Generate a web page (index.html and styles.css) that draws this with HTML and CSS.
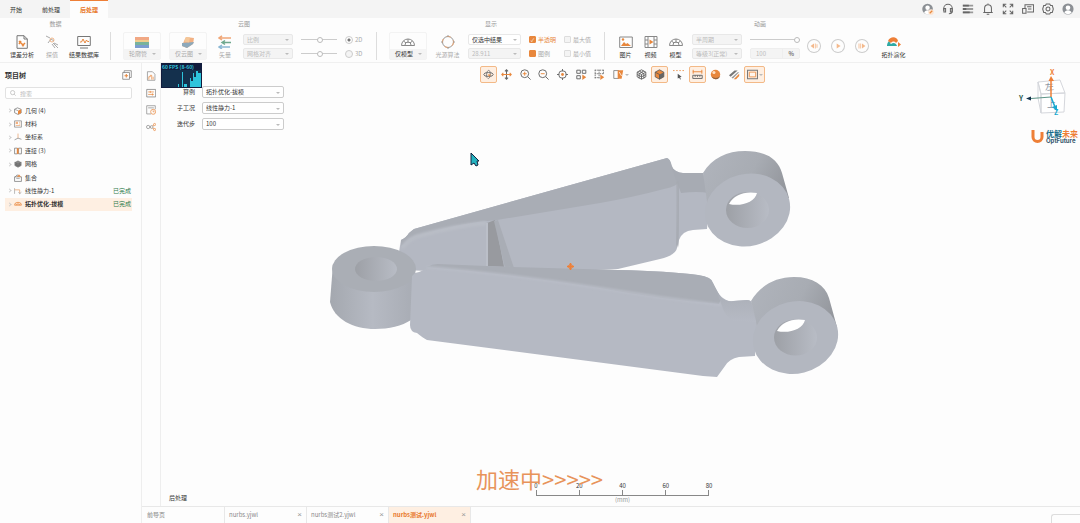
FILE: index.html
```html
<!DOCTYPE html>
<html lang="zh-CN">
<head>
    <meta charset="UTF-8">
    <meta name="viewport" content="width=device-width, initial-scale=1.0">
    <title>后处理</title>
    <link rel="stylesheet" href="styles.css">
</head>
<body>
    <header class="topbar">
        <nav class="main-tabs">
            <button class="main-tab">开始</button>
            <button class="main-tab">前处理</button>
            <button class="main-tab active">后处理</button>
        </nav>
        <div class="top-icons">
            <button class="icon-button" aria-label="用户">
                <svg viewBox="0 0 14 14"><circle cx="6.500" cy="7" r="6.200" fill="#8b8f94"/><circle cx="6.500" cy="5.500" r="2.600" fill="#fff"/><path d="M2.500 11.500c.5-4 7.500-4 8 0a6 6 0 0 1-8 0z" fill="#fff"/><circle cx="10.500" cy="10.500" r="3.300" fill="#fbe3d0"/><path d="M9 12l3-3" stroke="#e8873c" stroke-width="1.400"/></svg>
            </button>
            <button class="icon-button" aria-label="客服">
                <svg viewBox="0 0 14 14" class="line"><path d="M2 9V6.500a5 5 0 0 1 10 0V9c0 2-1.500 3.500-4 3.500"/><path d="M2.200 6.500h2v4h-2zM9.800 6.500h2v4h-2z"/></svg>
            </button>
            <button class="icon-button" aria-label="列表">
                <svg viewBox="0 0 14 14" class="line"><path d="M1 3h12M1 7h12M1 11h12" stroke-width="2.200" stroke="#999"/><path d="M1 3h7M1 7h4M1 11h8" stroke-width="2.200"/></svg>
            </button>
            <button class="icon-button" aria-label="通知">
                <svg viewBox="0 0 14 14" class="line"><path d="M1.500 11h11M3 11V6a4 4 0 0 1 8 0v5M7 .5V2M5.500 13h3"/></svg>
            </button>
            <button class="icon-button" aria-label="全屏">
                <svg viewBox="0 0 14 14" class="line"><path d="M1.500 5V1.500H5M1.500 1.500l3.500 3.500M9 1.500h3.500V5M12.500 1.500L9 5M1.500 9v3.500H5M1.500 12.500L5 9M12.500 9v3.500H9M12.500 12.500L9 9"/></svg>
            </button>
            <button class="icon-button" aria-label="窗口">
                <svg viewBox="0 0 14 14" class="line"><path d="M3.500 6V2h10v8.500H6M6 4.500h5M7 7h4M.7 6.500h4v5.500h-4z"/></svg>
            </button>
            <button class="icon-button" aria-label="设置">
                <svg viewBox="0 0 14 14" class="line"><path d="M5 1.200h4l1 1.700h2l1.200 4.100-1.200 4h-2l-1 1.800H5L4 11H2L.8 7 2 3h2z"/><circle cx="7" cy="7" r="2.300"/></svg>
            </button>
            <button class="icon-button" aria-label="账户">
                <svg viewBox="0 0 14 14"><circle cx="7" cy="7" r="6.500" fill="#8b8f94"/><circle cx="7" cy="5.500" r="2.700" fill="#fff"/><path d="M2.800 11.500c.5-4 7.900-4 8.400 0a6 6 0 0 1-8.400 0z" fill="#fff"/></svg>
            </button>
        </div>
    </header>

    <section class="ribbon">
        <div class="group">
            <h2 class="group-title">数据</h2>
            <div class="group-body data-body">
                <button class="tool tool-m">
                    <svg viewBox="0 0 14 14"><path d="M2 .7h7l3.300 3.300v9.300H2z" fill="none" stroke="#777"/><path d="M9 .7V4h3.300" fill="none" stroke="#777"/><path d="M4 6l5 5M4 9l2-3M7 11l3-3" stroke="#e8873c" stroke-width="1.500"/></svg>
                    <span>误差分析</span>
                </button>
                <button class="tool tool-s muted">
                    <svg viewBox="0 0 14 14" fill="none" stroke="#aaa"><path d="M1 1l4 2M3 8l3-4 3 2M8 8l5 5M7 9l3 4M9 8l4 2"/><circle cx="7" cy="5" r="2" stroke="#eeb589"/></svg>
                    <span>探值</span>
                </button>
                <button class="tool tool-l">
                    <svg viewBox="0 0 14 14" fill="none"><path d="M.7 1.500h12.600v9H.7zM3 13h8" stroke="#777"/><path d="M3 7h1.500L6 4l2 4 1.500-3 1 1.500H12" stroke="#e8873c"/></svg>
                    <span>结果数据库</span>
                </button>
            </div>
        </div>

        <div class="group">
            <h2 class="group-title">云图</h2>
            <div class="group-body">
                <button class="split muted">
                    <svg viewBox="0 0 14 11"><path d="M0 0h14v3H0z" fill="#f1a884"/><path d="M0 3h14v2H0z" fill="#f0cd8e"/><path d="M0 5h14v3H0z" fill="#79b39c"/><path d="M0 8h14v3H0z" fill="#7c9ed0"/></svg>
                    <span>轮廓管</span>
                </button>
                <button class="split muted">
                    <svg viewBox="0 0 14 11"><path d="M5 0l8 1-1 6-6 4-5-2 2-5z" fill="#f2b183"/><path d="M1 6l12-1-1 2-6 4-5-2z" fill="#8da9bb"/><path d="M5 0l4 .5-1 5-5-1z" fill="#f4c799"/></svg>
                    <span>仅云图</span>
                </button>
                <button class="tool tool-s muted">
                    <svg viewBox="0 0 14 14" fill="none" stroke-width="1.500"><path d="M1 3h12M4 .8L1 3l3 2" stroke="#f0a778"/><path d="M4 7.500h9M7 5.500L4 7.500l3 2" stroke="#6fa88e"/><path d="M1 12h11M4 10l-3 2 3 2" stroke="#8cb8d4"/></svg>
                    <span>矢量</span>
                </button>
                <div class="stack">
                    <span class="select"><select aria-label="比例" disabled><option>比例</option></select></span>
                    <span class="select"><select aria-label="对齐" disabled><option>网格对齐</option></select></span>
                </div>
                <div class="stack">
                    <input class="slider short" type="range" aria-label="比例值" value="52">
                    <input class="slider short" type="range" aria-label="密度值" value="52">
                </div>
                <div class="stack">
                    <label class="check muted"><input type="radio" name="dim" checked>2D</label>
                    <label class="check muted"><input type="radio" name="dim">3D</label>
                </div>
            </div>
        </div>

        <div class="group">
            <h2 class="group-title">显示</h2>
            <div class="group-body">
                <button class="split">
                    <svg viewBox="0 0 14 11" fill="none" stroke="#888"><path d="M.5 8.500a6.500 6.500 0 0 1 13 0zM4 8a3 3 0 0 1 6 0M7 2v4M2.500 4l2.500 2M11.500 4L9 6"/></svg>
                    <span>仅模型</span>
                </button>
                <button class="tool tool-c muted">
                    <svg viewBox="0 0 14 14" fill="none"><circle cx="7" cy="7" r="5.500" stroke="#999"/><circle cx="7" cy="7" r="5.500" stroke="#f2a66f" stroke-dasharray="4 4"/><path d="M7 0v2M7 12v2M0 7h2M12 7h2" stroke="#999"/></svg>
                    <span>光源算法</span>
                </button>
                <div class="stack">
                    <span class="select wide"><select aria-label="显示范围"><option>仅选中结果</option></select></span>
                    <span class="select wide"><select aria-label="阈值" disabled><option>28.911</option></select></span>
                </div>
                <div class="stack">
                    <label class="check accent"><input type="checkbox" checked>半透明</label>
                    <label class="check muted"><input type="checkbox" class="filled">图例</label>
                </div>
                <div class="stack">
                    <label class="check muted"><input type="checkbox">最大值</label>
                    <label class="check muted"><input type="checkbox">最小值</label>
                </div>
            </div>
        </div>

        <div class="group">
            <h2 class="group-title">动画</h2>
            <div class="group-body">
                <button class="tool tool-p">
                    <svg viewBox="0 0 14 14" fill="none"><path d="M.7 2h12.600v10.500H.7z" stroke="#888"/><path d="M2 11l3-4 2 2 1.500-1L12 11z" fill="#e8873c"/><circle cx="4" cy="4.500" r="1.200" fill="#e8873c"/></svg>
                    <span>图片</span>
                </button>
                <button class="tool tool-p">
                    <svg viewBox="0 0 14 14" fill="none"><path d="M1 1.500h12v11H1zM4 1.500v11M10 1.500v11M1 5h3M1 9h3M10 5h3M10 9h3" stroke="#888"/><path d="M5.500 4.500l4 2.500-4 2.500z" fill="#e8873c"/></svg>
                    <span>视频</span>
                </button>
                <button class="tool tool-p">
                    <svg viewBox="0 0 14 14" fill="none" stroke="#888"><path d="M.5 10.500a6.500 6.500 0 0 1 13 0zM4 10a3 3 0 0 1 6 0M7 4v4M2.500 6L5 8M11.500 6L9 8"/></svg>
                    <span>模型</span>
                </button>
                <div class="stack">
                    <span class="select"><select aria-label="周期" disabled><option>半周期</option></select></span>
                    <span class="select"><select aria-label="速度" disabled><option>等级3(正常)</option></select></span>
                </div>
                <div class="stack">
                    <input class="slider" type="range" aria-label="进度" value="100">
                    <span class="percent"><input type="text" aria-label="百分比" value="100" disabled><span>%</span></span>
                </div>
                <div class="player">
                    <button aria-label="上一帧"><svg viewBox="0 0 14 14"><path d="M7 4v6L3 7zM8 4h1v6H8zM10 5h1v4h-1z"/></svg></button>
                    <button aria-label="播放"><svg viewBox="0 0 14 14"><path d="M5.500 4v6L10 7z"/></svg></button>
                    <button aria-label="下一帧"><svg viewBox="0 0 14 14"><path d="M7 4v6l4-3zM5 4h1v6H5zM3 4h1v6H3z"/></svg></button>
                </div>
                <button class="tool tool-c">
                    <svg viewBox="0 0 14 14"><path d="M0 11a6.500 6.500 0 0 1 2-5l3 5z" fill="#2eaaa5"/><path d="M1 6c2-5 9-5 10 0l-2 2c-1-2-4-2-5 0z" fill="#ee7f37"/><path d="M3 11c1-4 6-4 7 0z" fill="#2eaaa5"/><path d="M11 7l3 2.500-3 2.500z" fill="#ee7f37"/></svg>
                    <span>拓扑演化</span>
                </button>
            </div>
        </div>
    </section>

    <main class="workspace">
        <aside class="sidebar">
            <div class="sidebar-head">
                <h1>项目树</h1>
                <button class="icon-button small" aria-label="展开">
                    <svg viewBox="0 0 14 14" fill="none"><path d="M1 3.500h9.500V13H1zM3 3.500V1h10v9.500h-2.500" stroke="#777"/><path d="M3.500 8h5M6 5.500v5" stroke="#e8873c" stroke-width="1.500"/></svg>
                </button>
            </div>
            <label class="search">
                <svg viewBox="0 0 8 8" fill="none" stroke="#bbb"><circle cx="3.500" cy="3.500" r="2.800"/><path d="M5.500 5.500l2 2"/></svg>
                <input type="text" placeholder="搜索" aria-label="搜索">
            </label>
            <ul class="tree">
                <li>
                    <i class="arrow"></i>
                    <svg viewBox="0 0 14 14"><path d="M1 4l5-2.500L12.500 4v6.500L7 13l-6-3z" fill="none" stroke="#777" stroke-width="1.300"/><path d="M7 6.500L12.500 4v6.500L7 13z" fill="#e8873c"/><path d="M1 4l6 2.500" stroke="#777"/></svg>
                    <span>几何 (4)</span>
                </li>
                <li>
                    <i class="arrow"></i>
                    <svg viewBox="0 0 14 14" fill="none"><path d="M1 1.500h12v11H1z" stroke="#888" stroke-width="1.300"/><path d="M3 3h4v4H3z" fill="#f3b07f"/><path d="M3 9.500h8M9 4h2M9 7h2" stroke="#e8873c"/></svg>
                    <span>材料</span>
                </li>
                <li>
                    <i class="arrow"></i>
                    <svg viewBox="0 0 14 14" fill="none"><path d="M7 1v8" stroke="#e8a06a" stroke-width="1.300"/><path d="M7 9l6 2M7 9l-6 3" stroke="#888" stroke-width="1.300"/></svg>
                    <span>坐标系</span>
                </li>
                <li>
                    <i class="arrow"></i>
                    <svg viewBox="0 0 14 14" fill="none"><path d="M1 2h5v10H1zM8 2h5v10H8z" stroke="#777" stroke-width="1.300"/><path d="M5 2h3v10H5z" fill="#e8873c"/></svg>
                    <span>连接 (3)</span>
                </li>
                <li>
                    <i class="arrow"></i>
                    <svg viewBox="0 0 14 14"><path d="M1 4l6-3 6 3v6l-6 3-6-3z" fill="#888"/><path d="M1 4l6 3 6-3M7 7v6M4 5.500v6M10 5.500v6M1 7l6 3 6-3" fill="none" stroke="#666"/></svg>
                    <span>网格</span>
                </li>
                <li>
                    <i class="arrow none"></i>
                    <svg viewBox="0 0 14 14" fill="none"><path d="M1 5h12v8H1zM2 5l3-3h3" stroke="#777" stroke-width="1.300"/><path d="M5 5l4-4 3 4z" fill="#e8873c"/><path d="M4 8h6" stroke="#777"/></svg>
                    <span>集合</span>
                </li>
                <li>
                    <i class="arrow"></i>
                    <svg viewBox="0 0 14 14" fill="none"><path d="M1 2v10" stroke="#888"/><path d="M1 5h9v6" stroke="#e8a06a" stroke-width="1.300"/><path d="M8 9l2 3 3-3" stroke="#888"/></svg>
                    <span>线性静力-1</span>
                    <em>已完成</em>
                </li>
                <li class="selected">
                    <i class="arrow"></i>
                    <svg viewBox="0 0 14 14" fill="none" stroke="#e8873c" stroke-width="1.400"><path d="M1 9a6 5 0 0 1 12 0zM4 9c0-3 6-3 6 0"/></svg>
                    <span>拓扑优化-拔模</span>
                    <em>已完成</em>
                </li>
            </ul>
        </aside>

        <section class="content">
            <div class="stage">
                <nav class="side-tools">
                    <button class="icon-button small" aria-label="报告"><svg viewBox="0 0 14 14" fill="none"><path d="M2 1h7l3.500 3.500V13H2z" stroke="#888"/><path d="M4 12V8h2V6h2v6M10 8v4" stroke="#e8873c"/></svg></button>
                    <button class="icon-button small" aria-label="参数"><svg viewBox="0 0 14 14" fill="none"><path d="M1 2h12.500v10.500H1z" stroke="#777"/><path d="M3 5.500h8M3 9h8M6 4v3M9 7.500v3" stroke="#e8873c"/></svg></button>
                    <button class="icon-button small" aria-label="历史"><svg viewBox="0 0 14 14" fill="none"><path d="M7 12.500H1V1h12v5M3 4h8" stroke="#888"/><circle cx="10" cy="9.500" r="3.500" stroke="#e8873c"/><path d="M10 7.500v2h2" stroke="#e8873c"/></svg></button>
                    <button class="icon-button small" aria-label="关联"><svg viewBox="0 0 14 14" fill="none"><circle cx="3" cy="7" r="2.300" stroke="#888"/><circle cx="8" cy="7" r="2" stroke="#888"/><circle cx="12" cy="3.500" r="1.500" stroke="#e8873c"/><circle cx="12" cy="10.500" r="1.500" stroke="#e8873c"/><path d="M9 8l2 2M9 6l2-2" stroke="#e8873c"/></svg></button>
                </nav>

                <div class="viewport">
                    <svg class="model" viewBox="161 63 919 443">
                        <defs>
                            <linearGradient id="barrel" x1="0" x2="1">
                                <stop offset="0" stop-color="#a4a8af"/>
                                <stop offset=".5" stop-color="#b6bac3"/>
                                <stop offset="1" stop-color="#a8acb4"/>
                            </linearGradient>
                            <linearGradient id="eye" x1="0" y1="0" x2="1" y2=".4">
                                <stop offset="0" stop-color="#b0b4bc"/>
                                <stop offset=".6" stop-color="#a8acb3"/>
                                <stop offset="1" stop-color="#94979d"/>
                            </linearGradient>
                            <linearGradient id="bore" x1="0" x2="1">
                                <stop offset="0" stop-color="#9da0a6"/>
                                <stop offset="1" stop-color="#b8bcc5"/>
                            </linearGradient>
                            <linearGradient id="neck" x1="0" y1="0" x2="0" y2="1">
                                <stop offset="0" stop-color="#a8acb4"/>
                                <stop offset="1" stop-color="#b6bac4"/>
                            </linearGradient>
                            <filter id="soft" x="-10%" y="-10%" width="120%" height="120%"><feGaussianBlur stdDeviation="1"/></filter>
                        </defs>
                        <!-- rear arm -->
                        <path d="M667 158Q671 159 671 166 675 173 683 173H703L710 193 707 229 693 230Q682 231 679 240L677 248Q676 255 660 259L618 269 498 274 404 270 399 252 401 240Q406 238 409 233L414 229z" fill="#b4b8c2"/>
                        <path d="M414 229L667 158Q670 159 672 166L678 182Q678 186 664 189 634 197 600 203L497 220Q457 223 422 235 410 240 401 246L401 240Q406 238 409 233z" fill="#a9adb5"/>
                        <path d="M402 248q8-11 20-13 34-9 64-12" fill="none" stroke="#b9bdc6" stroke-width="4" filter="url(#soft)"/>
                        <path d="M671 166q5 7 12 7h20l6 20q-12-2-28 0z" fill="#a7abb3"/>
                        <path d="M678 182q1 30-1 64" fill="none" stroke="#a5a9b0" stroke-width="3" filter="url(#soft)"/>
                        <path d="M487 223l8-3 9 47h-18z" fill="#989a9f"/>
                        <path d="M494 221l4-1 16 48h-9z" fill="#a9adb5"/>
                        <path d="M487 223v43" stroke="#bbbfc8" stroke-width="2"/>
                        <!-- left ring -->
                        <path d="M333 264l-3 38c4 17 23 27 45 27 14 0 27-3 36-9l4-48z" fill="url(#barrel)"/>
                        <ellipse cx="374" cy="269" rx="42" ry="23" fill="#aaaeb5"/>
                        <ellipse cx="376" cy="269" rx="21" ry="12" fill="url(#bore)"/>
                        <!-- front arm -->
                        <path d="M412 276l3-3q9-2 12-6 5-3 11-3l75 3 105 3q50 1 80 5 14 2 15 8 8 20 21 18l14-1q4 0 5 6l4 16-2 34-16 1q-10 2-14 9l-8 11-14-1-276-36q-4-2-10-7-7-1-7-8z" fill="#b5b9c3"/>
                        <path d="M427 267q5-3 11-3l75 3 105 3q50 1 80 5 14 2 15 8l8 15-2 6q-60-5-119-16-90-14-173-21z" fill="#a9adb5"/>
                        <path d="M427 267q90 8 173 21 60 10 121 17" fill="none" stroke="#babec8" stroke-width="2" filter="url(#soft)"/>
                        <path d="M714 286q7 17 19 15l14-1q5 0 5 6l5 16-23-1q-9-3-13-18z" fill="url(#neck)"/>
                        <!-- upper eye -->
                        <path d="M703 173c9-15 24-22 42-22 21 0 33 8 37 22l7 25-80 20-3-24z" fill="url(#eye)"/>
                        <ellipse cx="747.500" cy="210" rx="43" ry="36" transform="rotate(-14 747.500 210)" fill="#b3b7c0"/>
                        <ellipse cx="747.500" cy="210" rx="21.500" ry="18" fill="url(#bore)"/>
                        <path d="M729 204c5-9 15-13 28-11-2 9-16 14-28 11z" fill="#fff"/>
                        <!-- lower eye -->
                        <path d="M751 301c9-15 24-24 43-24 19 0 31 8 35 21l8 29-79 20-2-26z" fill="url(#eye)"/>
                        <ellipse cx="795.500" cy="337.500" rx="43" ry="36" transform="rotate(-14 795.500 337.500)" fill="#b3b7c0"/>
                        <ellipse cx="795.500" cy="337.500" rx="21.500" ry="18" fill="url(#bore)"/>
                        <path d="M777 331c5-9 15-13 28-11-2 9-16 14-28 11z" fill="#fff"/>
                        <!-- rotation centre -->
                        <path d="M567 266.500h7M570.500 263v7" stroke="#ee7f37" stroke-width="1.500"/>
                        <circle cx="570.500" cy="266.500" r="2" fill="none" stroke="#ee7f37"/>
                        <path d="M471 153v12l3-2 2 3 2-1-1-4h2z" fill="#24b3c0" stroke="#13233f"/>
                    </svg>

                    <div class="view-tools">
                        <button class="view-tool on" aria-label="旋转"><svg viewBox="0 0 14 14" class="line"><ellipse cx="7" cy="7" rx="6" ry="2.500"/><path d="M5 11c-2-8 3-12 4-7s-1 9-3 8" stroke="#777"/><path d="M6 7h4l-2 3z" fill="#e8873c" stroke="none"/></svg></button>
                        <button class="view-tool" aria-label="平移"><svg viewBox="0 0 14 14" fill="none" stroke-width="1.300"><path d="M7 1v12M5 3l2-2 2 2M5 11l2 2 2-2" stroke="#666"/><path d="M1 7h12M3 5L1 7l2 2M11 5l2 2-2 2" stroke="#e8873c"/></svg></button>
                        <button class="view-tool" aria-label="放大"><svg viewBox="0 0 14 14" class="line"><circle cx="6" cy="6" r="5"/><path d="M10 10l3.500 3.500"/><path d="M3.500 6h5M6 3.500v5" stroke="#e8873c"/></svg></button>
                        <button class="view-tool" aria-label="缩小"><svg viewBox="0 0 14 14" class="line"><circle cx="6" cy="6" r="5"/><path d="M10 10l3.500 3.500"/><path d="M3.500 6h5" stroke="#e8873c"/></svg></button>
                        <button class="view-tool" aria-label="适应"><svg viewBox="0 0 14 14" class="line"><circle cx="7" cy="7" r="4.800"/><path d="M7 0v3M7 11v3M0 7h3M11 7h3"/><circle cx="7" cy="7" r="1.800" fill="#e8873c" stroke="none"/></svg></button>
                        <button class="view-tool" aria-label="框选"><svg viewBox="0 0 14 14" class="line"><path d="M1 1.500h4.500v4H1zM8 1.500h4.500v4H8zM1 8.500h4.500v4H1z"/><path d="M8 7l5 3.500L8 14z" fill="#e8873c" stroke="none"/></svg></button>
                        <button class="view-tool" aria-label="虚线框选"><svg viewBox="0 0 14 14" class="line"><path d="M1 1.500h12M1 6h12M1 11h6M1.500 1v11M6.500 1v11M12 1v5" stroke-dasharray="2 1" stroke="#777"/><path d="M8 7l5 3.500L8 14z" fill="#e8873c" stroke="none"/></svg></button>
                        <button class="view-tool has-menu" aria-label="剖切"><svg viewBox="0 0 14 14" fill="none"><path d="M1 2h6v10H1z" stroke="#777"/><path d="M6 1.500h7l-2 11H6z" fill="#e8873c"/><path d="M8 4l3 5" stroke="#fff"/></svg></button>
                        <button class="view-tool" aria-label="网格"><svg viewBox="0 0 14 14" class="line"><path d="M1.500 4L7 1l5.500 3v6L7 13l-5.500-3zM1.500 4L7 7l5.500-3M7 7v6M4 2.500L10 6v6M10 2.500L4 6v6M1.500 7L7 10l5.500-3"/></svg></button>
                        <button class="view-tool on" aria-label="实体"><svg viewBox="0 0 14 14"><path d="M1.500 4L7 1l5.500 3v6L7 13l-5.500-3z" fill="#e8873c" stroke="#555"/><path d="M7 7l5.500-3v6L7 13z" fill="#666"/><path d="M1.500 4L7 7v6" fill="none" stroke="#555"/></svg></button>
                        <button class="view-tool" aria-label="点选"><svg viewBox="0 0 14 14"><path d="M0 2h14" stroke="#e8873c" stroke-dasharray="2 2"/><path d="M6 6l5 4-2 .5 1 2.500-1 .5-1-2.500-2 1z" fill="#555"/></svg></button>
                        <button class="view-tool on" aria-label="标尺"><svg viewBox="0 0 14 14" class="line"><path d="M1 8h12v4H1zM4 8v2M7 8v2M10 8v2"/><path d="M1 3.500h12M1.500 1v5M12.500 1v5" stroke="#e8873c"/></svg></button>
                        <button class="view-tool" aria-label="材质"><svg viewBox="0 0 14 14"><circle cx="7" cy="7" r="6" fill="#e8873c"/><path d="M2 10a6 6 0 0 0 11-1c-3 3-7 3-11 1z" fill="#92623e"/><circle cx="5" cy="4.500" r="2" fill="#ffe0c2"/></svg></button>
                        <button class="view-tool" aria-label="条纹"><svg viewBox="0 0 14 14"><path d="M0 8l7-6h4L2 10z" fill="#777"/><path d="M3 11l8-7h2l-8 8z" fill="#999"/><path d="M6 13l7-7v3l-4 4z" fill="#e8873c"/></svg></button>
                        <button class="view-tool has-menu on" aria-label="背景"><svg viewBox="0 0 14 14"><path d="M.7 1.700h12.600v10.600H.7z" fill="none" stroke="#777" stroke-width="1.300"/><path d="M3 4h8v6H3z" fill="#fff5ec" stroke="#e8873c"/></svg></button>
                    </div>

                    <form class="case-form">
                        <label for="case">算例</label>
                        <span class="select outlined"><select id="case"><option>拓扑优化-拔模</option></select></span>
                        <label for="step">子工况</label>
                        <span class="select outlined"><select id="step"><option>线性静力-1</option></select></span>
                        <label for="iteration">迭代步</label>
                        <span class="select outlined"><select id="iteration"><option>100</option></select></span>
                    </form>

                    <div class="fps">
                        <span>60 FPS (8-60)</span>
                        <svg viewBox="0 0 39 17"><path d="M0 0h39v17H0z" fill="#14304d"/><path d="M16 17v-3h1v3zM20 17V2h1v15zM22 17v-3h3v3zM28 17V8h1v9zM29 17v-6h2v6zM31 17V3h1v14zM32 17V7h2v10zM34 17V1h2v16zM36 17V3h3v14z" fill="#2ec4dc"/></svg>
                    </div>

                    <svg class="triad" viewBox="1016 68 64 78">
                        <path d="M1038 82l22-2 5 13-24 1zM1041 94l24-1-1 19-23 1zM1038 82l3 12v19l-3-15z" fill="#fff" stroke="#d5d7dc"/>
                        <text x="1045" y="90" class="cube-text" transform="rotate(-6 1051 88)">左</text>
                        <text x="1047" y="107" class="cube-text">上</text>
                        <path d="M1051 97V80" stroke="#ee7f37" stroke-width="1.500"/><path d="M1048.500 81l2.500-5 3 5z" fill="#ee7f37"/>
                        <path d="M1051 97l-20 1.500" stroke="#5d9487"/><path d="M1026 98.500l5-2v4z" fill="#13304a"/>
                        <path d="M1051 97l4 10" stroke="#1aa9cf" stroke-width="1.500"/><path d="M1052 107l5-2 0 6z" fill="#1aa9cf"/>
                        <text x="1050" y="75" class="axis axis-x">X</text>
                        <text x="1019" y="101" class="axis axis-y">Y</text>
                        <text x="1054" y="115" class="axis axis-z">Z</text>
                        <path d="M1033 130v7a4.500 4.500 0 0 0 9 0v-5" fill="none" stroke="#ee7f37" stroke-width="3"/>
                        <text x="1046" y="137" class="brand">优解<tspan class="brand-end">未来</tspan></text>
                        <text x="1046" y="143" class="brand-latin">OptFuture</text>
                    </svg>

                    <div class="scale">
                        <div class="scale-labels"><span>0</span><span>20</span><span>40</span><span>60</span><span>80</span></div>
                        <div class="scale-line"><i></i><i></i><i></i><i></i></div>
                        <span class="scale-unit">(mm)</span>
                    </div>
                    <p class="caption">加速中&gt;&gt;&gt;&gt;&gt;</p>
                    <p class="mode">后处理</p>
                </div>
            </div>

            <nav class="file-tabs">
                <button class="file-tab">前导页</button>
                <button class="file-tab">nurbs.yjwl<i>×</i></button>
                <button class="file-tab">nurbs测试2.yjwl<i>×</i></button>
                <button class="file-tab active">nurbs测试.yjwl<i>×</i></button>
                <span class="corner-tip"></span>
            </nav>
        </section>
    </main>
</body>
</html>
```
FILE: styles.css
```css
* {
    box-sizing: border-box;
}

body, button, input, select {
    font-family: "Noto Sans CJK SC", "Noto Sans", sans-serif;
    font-size: 6px;
    line-height: 8px;
    color: #333;
}

body {
    margin: 0;
    height: 100vh;
    display: flex;
    flex-direction: column;
    overflow: hidden;
    background-color: #fdfdfd;
}

h1, h2, p, ul {
    margin: 0;
    padding: 0;
}

button {
    padding: 0;
    border: none;
    background: none;
    cursor: pointer;
}

i, em {
    font-style: normal;
}

svg {
    display: block;
}

.line {
    fill: none;
    stroke: #666;
    stroke-width: 1.2;
}

.muted {
    color: #aaa;
}

/* top bar */
.topbar {
    display: flex;
    justify-content: space-between;
    height: 18px;
    padding-right: 6px;
    background-color: #f4f4f4;
}

.main-tabs, .top-icons {
    display: flex;
}

.main-tab {
    padding: 0 10px;
    border-top: 1px solid transparent;
}

.main-tab.active {
    color: #e8782a;
    font-weight: bold;
    background-color: #fdfdfd;
    border-top-color: #ee7f37;
}

.top-icons {
    align-items: center;
    gap: 8px;
}

.icon-button, .icon-button svg {
    width: 12px;
    height: 12px;
}

.icon-button.small, .icon-button.small svg {
    width: 10px;
    height: 10px;
}

/* ribbon */
.ribbon {
    display: grid;
    grid-template-columns: 111px 266px 228px 1fr;
    height: 45px;
    border-bottom: 1px solid #f0f0f0;
}

.group {
    display: flex;
    flex-direction: column;
}

.group:last-child {
    width: 310px;
}

.group-title {
    height: 14px;
    padding-top: 2px;
    font-size: 6px;
    font-weight: normal;
    text-align: center;
    color: #999;
}

.group-body {
    display: flex;
    gap: 8px;
    height: 28px;
    padding-left: 12px;
}

.group:not(:last-child) .group-body {
    border-right: 1px solid #ddd;
}

.data-body {
    gap: 6px;
    padding-left: 8px;
}

.tool {
    display: flex;
    flex-direction: column;
    align-items: center;
    gap: 2px;
    padding-top: 3px;
    white-space: nowrap;
}

.tool svg {
    width: 14px;
    height: 14px;
}

.tool-s {
    width: 20px;
}

.tool-p {
    width: 17px;
}

.tool-c {
    width: 25px;
}

.tool-m {
    width: 28px;
}

.tool-l {
    width: 32px;
}

.split {
    display: flex;
    flex-direction: column;
    align-items: center;
    justify-content: space-between;
    position: relative;
    width: 38px;
    padding-top: 4px;
    border: 1px solid #f3f3f3;
    border-radius: 2px;
}

.split svg {
    width: 14px;
    height: 11px;
}

.split span {
    align-self: stretch;
    padding-right: 8px;
    line-height: 10px;
    background-color: #f4f4f4;
}

.split::after, .select::after, .has-menu::after {
    content: "";
    position: absolute;
    right: 4px;
    bottom: 4px;
    border: 2px solid transparent;
    border-top-color: #bbb;
    border-bottom: none;
}

.stack {
    display: flex;
    flex-direction: column;
    gap: 3px;
    padding-top: 2px;
}

.select {
    display: flex;
    position: relative;
    width: 50px;
    height: 11px;
}

.select.wide {
    width: 53px;
}

.select.outlined {
    width: 82px;
    height: 12px;
}

.select select {
    appearance: none;
    width: 100%;
    padding: 0 3px;
    border: 1px solid #e8e8e8;
    border-radius: 2px;
    background-color: #fff;
}

.select select:disabled {
    opacity: 1;
    color: #bbb;
    background-color: #f4f4f4;
}

.outlined select {
    border-color: #ccc;
}

.slider {
    appearance: none;
    width: 50px;
    height: 11px;
    margin: 0;
    background: linear-gradient(#ccc, #ccc) center / 100% 1px no-repeat;
}

.slider.short {
    width: 36px;
}

.slider::-webkit-slider-thumb {
    appearance: none;
    width: 6px;
    height: 6px;
    border: 1px solid #bbb;
    border-radius: 50%;
    background-color: #fff;
}

.check {
    display: flex;
    align-items: center;
    gap: 2px;
    height: 11px;
    white-space: nowrap;
}

.check.accent {
    color: #e8873c;
}

.check input {
    appearance: none;
    width: 7px;
    height: 7px;
    margin: 0;
    border: 1px solid #ddd;
    border-radius: 1px;
    background-color: #f4f4f4;
}

.check input[type="radio"] {
    width: 8px;
    height: 8px;
    border-color: #ccc;
    border-radius: 50%;
}

.check input[type="radio"]:checked {
    background: radial-gradient(#777 1px, #fff 2px);
}

.check input[type="checkbox"]:checked, .check .filled {
    border-color: #e8873c;
    background-color: #e8873c;
}

.check input[type="checkbox"]:checked::before {
    content: "✓";
    display: block;
    font-size: 5px;
    line-height: 5px;
    text-align: center;
    color: #fff;
}

.percent {
    display: flex;
    align-items: center;
    justify-content: space-between;
    width: 50px;
    height: 11px;
    padding-right: 5px;
    border: 1px solid #eee;
    border-radius: 2px;
    background-color: #f4f4f4;
}

.percent input {
    width: 32px;
    height: 9px;
    padding: 0 5px;
    border: none;
    border-right: 1px solid #eee;
    background: none;
    color: #bbb;
}

.player {
    display: flex;
    align-items: center;
    gap: 12px;
    padding-right: 5px;
}

.player button, .player svg {
    width: 12px;
    height: 12px;
}

.player button {
    border-radius: 50%;
    box-shadow: 0 0 0 1px #ccc;
}

.player svg {
    fill: #f4b98c;
}

/* workspace */
.workspace {
    display: flex;
    flex: 1;
    min-height: 0;
}

.sidebar {
    width: 142px;
    padding: 7px 9px 0 5px;
    border-right: 1px solid #eee;
}

.sidebar-head {
    display: flex;
    align-items: center;
    justify-content: space-between;
}

.sidebar-head h1 {
    font-size: 7px;
    line-height: 10px;
}

.search {
    display: flex;
    align-items: center;
    gap: 4px;
    height: 12px;
    margin: 7px 0 5px;
    padding: 0 4px;
    border: 1px solid #e2e2e2;
    border-radius: 2px;
    background-color: #fff;
}

.search svg {
    width: 6px;
    height: 6px;
}

.search input {
    flex: 1;
    min-width: 0;
    height: 10px;
    padding: 0;
    border: none;
    background: none;
}

.search input::placeholder {
    color: #bbb;
}

.tree {
    display: grid;
    grid-auto-rows: 1fr;
    height: 107px;
    list-style-type: none;
}

.tree li {
    display: flex;
    align-items: center;
    gap: 3px;
    padding: 0 1px 0 3px;
}

.tree li.selected {
    font-weight: bold;
    background-color: #feefe2;
}

.tree svg {
    width: 8px;
    height: 8px;
}

.tree em {
    margin-left: auto;
    font-weight: normal;
    color: #2c7a4b;
}

.arrow {
    width: 3px;
    height: 3px;
    border-top: 1px solid #ccc;
    border-right: 1px solid #ccc;
    transform: rotate(45deg);
}

.arrow.none {
    visibility: hidden;
}

.content {
    display: flex;
    flex: 1;
    flex-direction: column;
    min-width: 0;
}

.stage {
    display: flex;
    flex: 1;
    min-height: 0;
}

.side-tools {
    display: flex;
    flex-direction: column;
    align-items: center;
    gap: 7px;
    width: 19px;
    padding-top: 8px;
    border-right: 1px solid #eee;
}

.viewport {
    display: flex;
    flex: 1;
    flex-direction: column;
    position: relative;
    min-width: 0;
    padding: 3px 0 2px 4px;
}

.model {
    position: absolute;
    top: 0;
    left: 0;
    width: 100%;
    height: 100%;
}

.view-tools {
    display: flex;
    justify-content: space-between;
    align-self: center;
    position: relative;
    width: 286px;
}

.view-tool {
    display: flex;
    align-items: center;
    justify-content: center;
    position: relative;
    width: 17px;
    height: 17px;
    border: 1px solid transparent;
    border-radius: 2px;
}

.view-tool svg {
    width: 11px;
    height: 11px;
}

.view-tool.on {
    border-color: #f3b987;
    background-color: #feefe2;
}

.view-tool.has-menu {
    justify-content: flex-start;
    width: 21px;
    padding-left: 2px;
}

.view-tool.has-menu::after {
    right: 1px;
    bottom: 6px;
}

.case-form {
    display: grid;
    grid-template-columns: 30px 82px;
    align-items: center;
    gap: 4px 7px;
    position: relative;
    margin-top: 3px;
    text-align: right;
}

.fps {
    position: absolute;
    top: 0;
    left: 0;
    width: 41px;
    padding: 0 1px 1px;
    font-size: 5px;
    line-height: 7px;
    font-weight: bold;
    white-space: nowrap;
    color: #2ec4dc;
    background-color: #121c3d;
}

.triad {
    position: absolute;
    top: 5px;
    right: 0;
    width: 64px;
    height: 78px;
}

.cube-text {
    font-size: 9px;
    fill: #8791a0;
}

.axis {
    font-size: 7px;
    font-weight: bold;
}

.axis-x {
    fill: #ee7f37;
}

.axis-y {
    fill: #2b5a4c;
}

.axis-z {
    fill: #1aa9cf;
}

.brand {
    font-size: 8px;
    font-weight: bold;
    fill: #176b87;
}

.brand-end {
    fill: #ee7f37;
}

.brand-latin {
    font-family: Inter, sans-serif;
    font-size: 6px;
    font-weight: bold;
    fill: #33556b;
}

.scale {
    align-self: center;
    position: relative;
    width: 173px;
    margin-top: auto;
    text-align: center;
}

.scale-labels {
    display: flex;
    justify-content: space-between;
    margin: 0 -5px;
}

.scale-labels span {
    width: 10px;
}

.scale-line {
    display: grid;
    grid-template-columns: repeat(4, 1fr);
    height: 6px;
    border-right: 1px solid #888;
    border-bottom: 1px solid #888;
}

.scale-line i {
    border-left: 1px solid #888;
}

.scale-unit {
    display: block;
    color: #999;
}

.caption {
    position: absolute;
    left: 315px;
    bottom: 13px;
    font-size: 22px;
    line-height: 30px;
    color: #e8935a;
}

.mode {
    position: absolute;
    left: 8px;
    bottom: 4px;
}

/* open files */
.file-tabs {
    display: flex;
    height: 17px;
    padding-left: 1px;
    border-top: 1px solid #e8e8e8;
}

.file-tab {
    display: flex;
    align-items: center;
    justify-content: space-between;
    width: 82px;
    padding: 0 4px;
    border-right: 1px solid #e8e8e8;
    color: #888;
}

.file-tab.active {
    font-weight: bold;
    color: #e8782a;
    background-color: #feefe2;
}

.file-tab i {
    font-family: "Liberation Sans", sans-serif;
    font-size: 8px;
    font-weight: normal;
    color: #999;
}

.corner-tip {
    align-self: flex-end;
    width: 29px;
    height: 9px;
    margin-left: auto;
    border: 1px solid #ddd;
    border-width: 1px 0 0 1px;
    border-radius: 3px 0 0 0;
}
```
